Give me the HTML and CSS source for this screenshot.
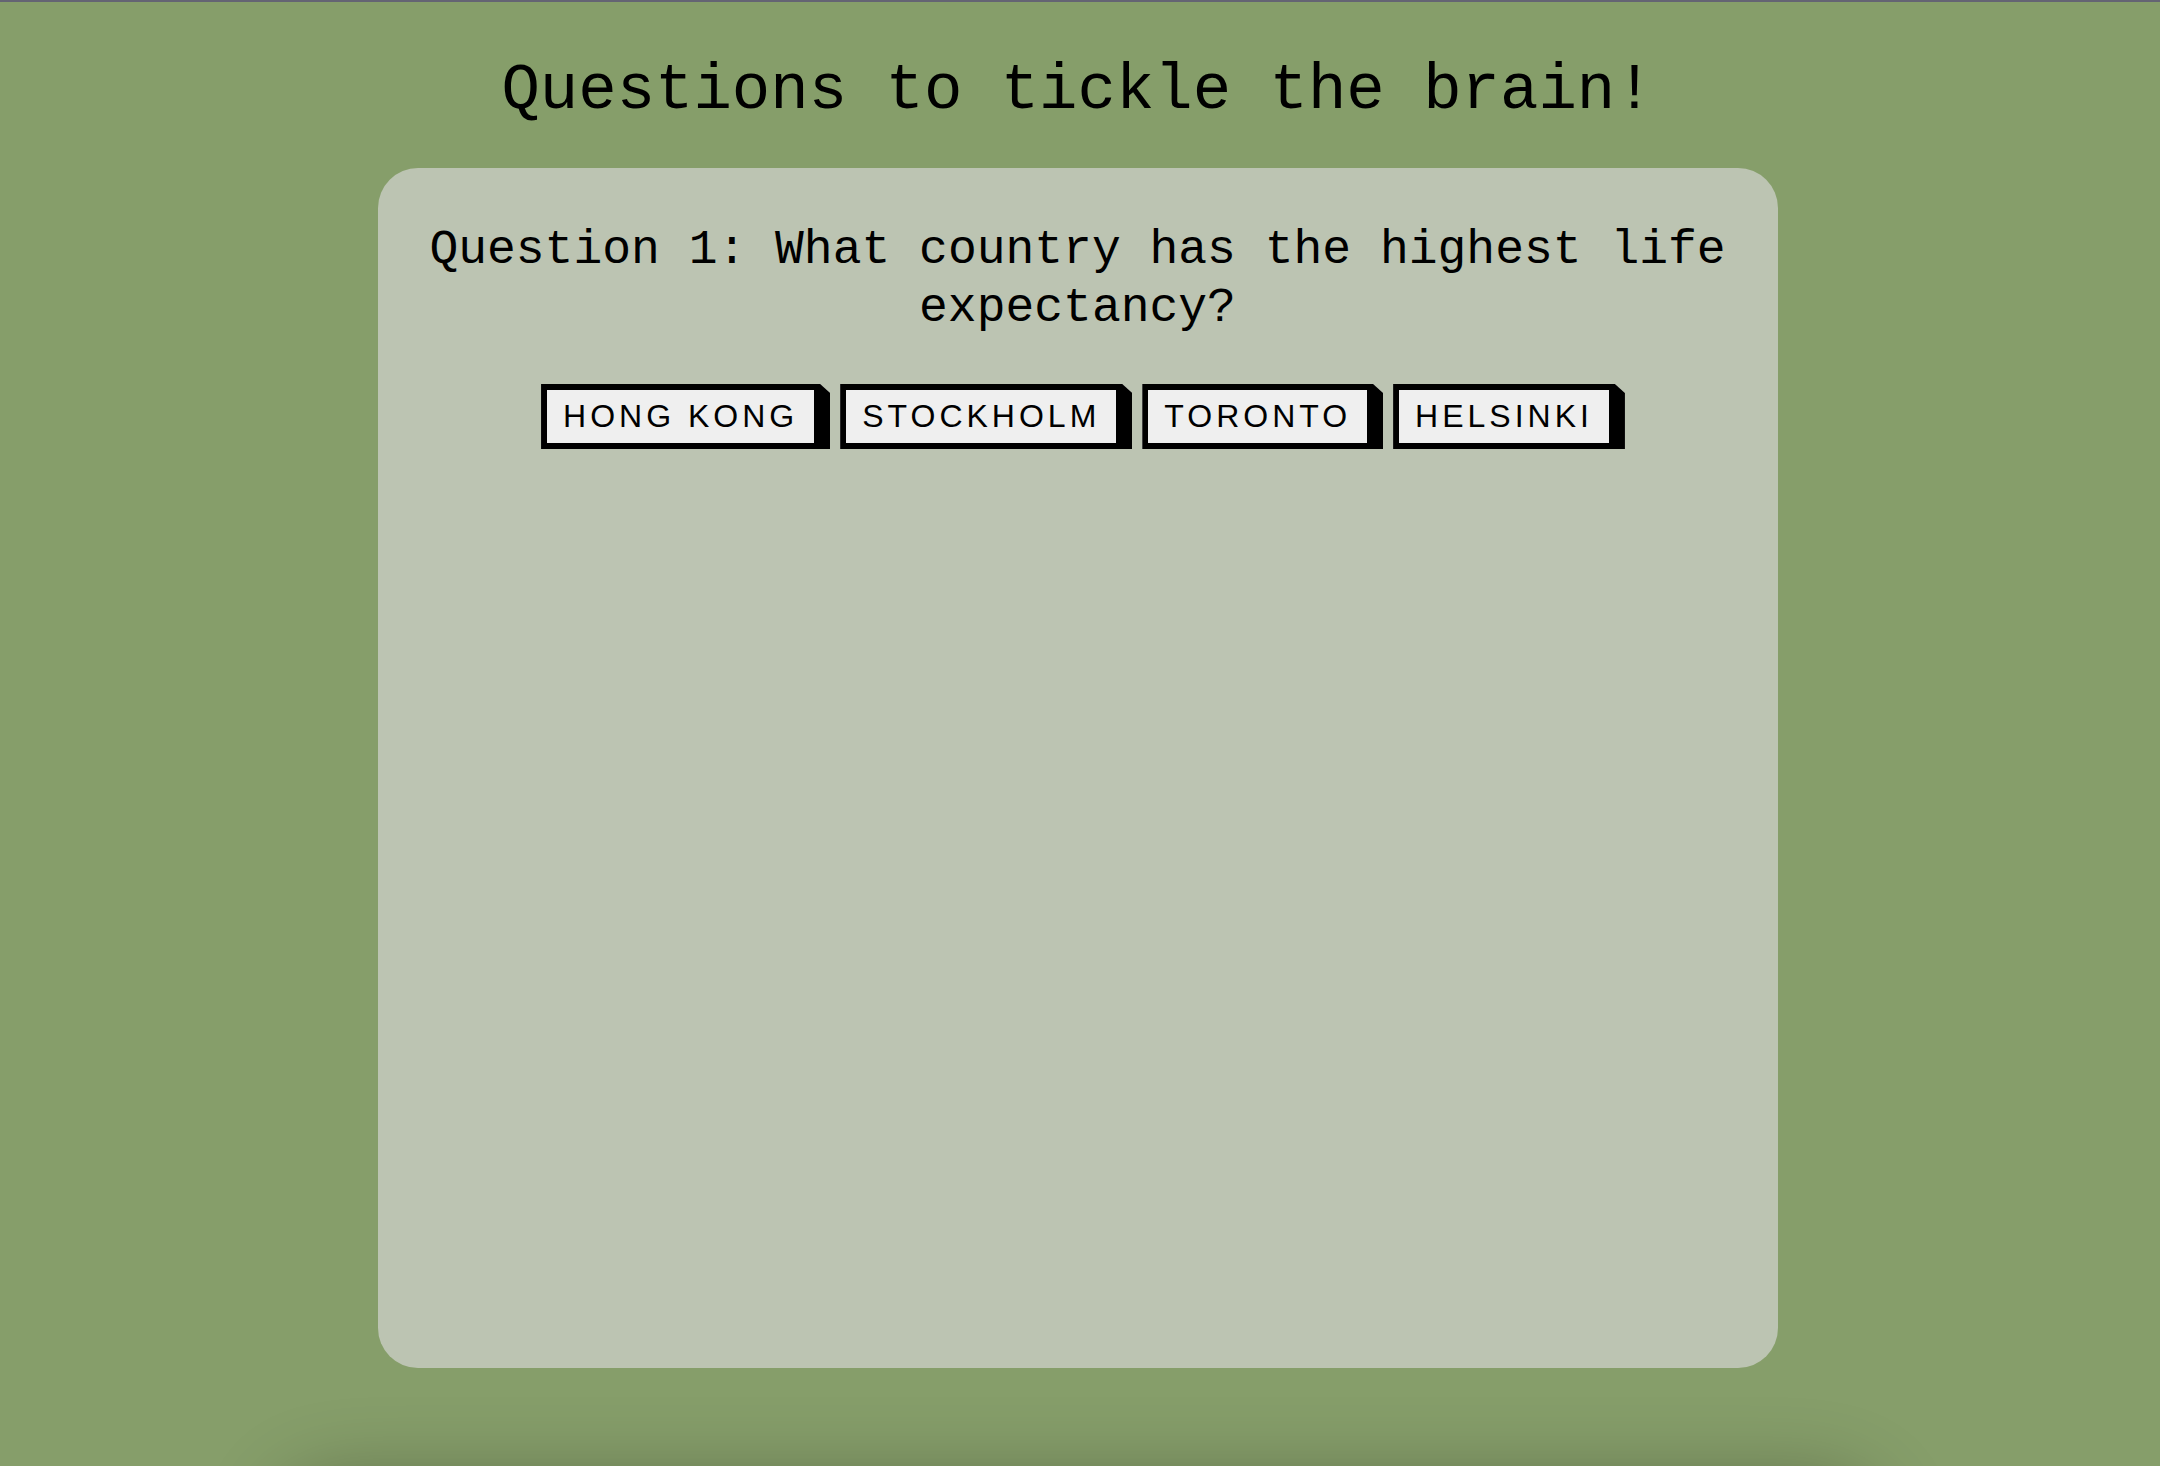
FILE: index.html
```html
<!DOCTYPE html>
<html lang="en">
<head>
<meta charset="utf-8">
<title>Questions to tickle the brain!</title>
<link rel="stylesheet" href="styles.css">
</head>
<body>
  <h1 class="title">Questions to tickle the brain!</h1>
  <main class="card">
    <p class="question">Question 1: What country has the highest life expectancy?</p>
    <div class="answers">
      <button class="answer">HONG KONG</button>
      <button class="answer">STOCKHOLM</button>
      <button class="answer">TORONTO</button>
      <button class="answer">HELSINKI</button>
    </div>
  </main>
  <div class="next-card"></div>
</body>
</html>
```
FILE: styles.css
```css
html, body {
  margin: 0;
  padding: 0;
}

body {
  background: #869e6a;
  border-top: 2px solid #646473;
  padding-right: 5px;
  font-family: "Liberation Mono", "DejaVu Sans Mono", monospace;
  color: #000;
  overflow: hidden;
}

.title {
  margin: 49px 0 0;
  font-size: 64px;
  font-weight: 400;
  line-height: 80px;
  text-align: center;
}

.card {
  box-sizing: border-box;
  width: 1400px;
  height: 1200px;
  margin: 37px auto 0;
  padding: 53px 40px 0;
  background: #bcc4b2;
  border-radius: 40px;
}

.question {
  margin: 0;
  font-size: 48px;
  line-height: 58px;
  text-align: center;
}

.answers {
  display: flex;
  justify-content: center;
  gap: 10px;
  margin-top: 47px;
  padding-left: 11px;
}

.answer {
  font-family: "Liberation Sans", Arial, sans-serif;
  font-size: 32px;
  line-height: 37px;
  letter-spacing: 4px;
  color: #000;
  background: #efefef;
  padding: 8px 16px;
  margin: 0;
  border-style: solid;
  border-color: #000;
  border-width: 6px 16px 6px 6px;
  border-radius: 0;
  clip-path: polygon(0 0, calc(100% - 10px) 0, 100% 9px, 100% 100%, 0 100%);
  cursor: pointer;
}

.next-card {
  width: 1560px;
  height: 200px;
  margin: 132px auto 0;
  border-radius: 40px;
  box-shadow: 0 0 80px 20px rgba(0, 0, 0, 0.3);
}
```
